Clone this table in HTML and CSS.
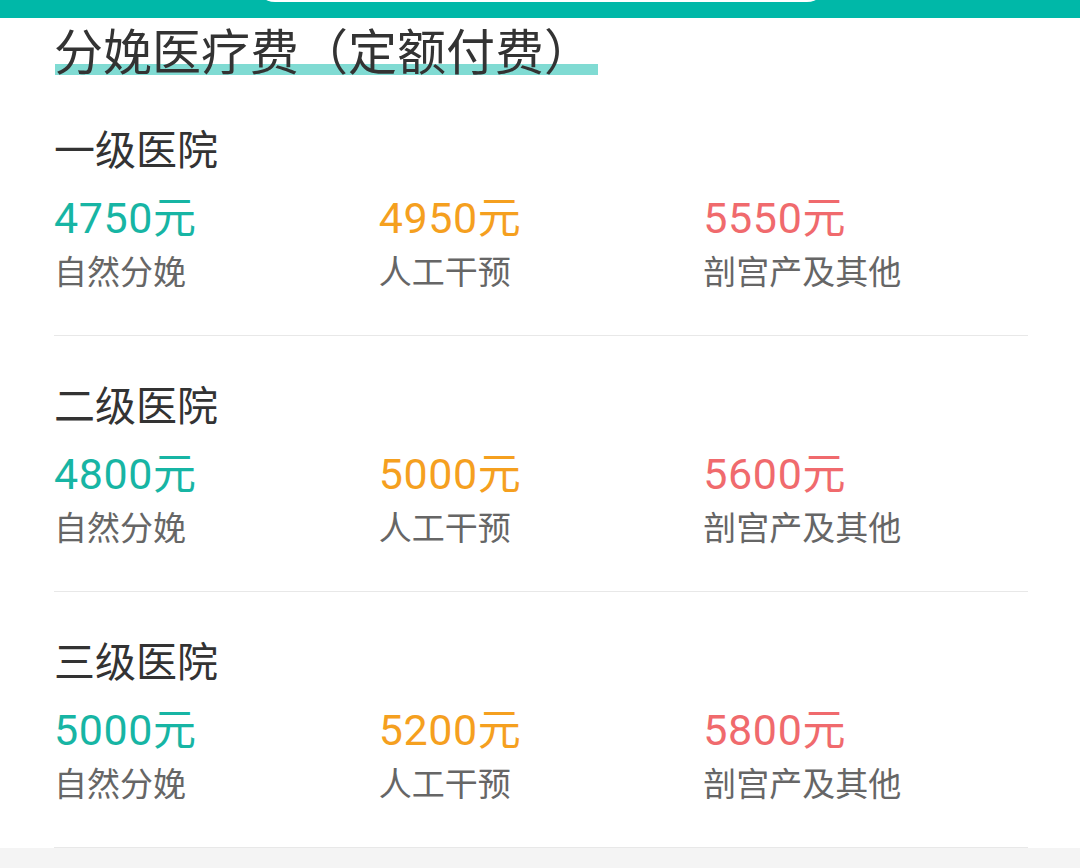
FILE: index.html
```html
<!DOCTYPE html>
<html lang="zh-CN">
<head>
<meta charset="utf-8">
<title>分娩医疗费</title>
<link rel="stylesheet" href="styles.css">
</head>
<body>
<div class="topbar"><div class="search-pill"></div></div>
<main class="card">
  <h1 class="title">分娩医疗费（定额付费）</h1>

  <section class="level">
    <h2 class="level-name">一级医院</h2>
    <div class="fees">
      <div class="fee"><div class="price teal">4750元</div><div class="label">自然分娩</div></div>
      <div class="fee"><div class="price orange">4950元</div><div class="label">人工干预</div></div>
      <div class="fee"><div class="price red">5550元</div><div class="label">剖宫产及其他</div></div>
    </div>
  </section>

  <section class="level">
    <h2 class="level-name">二级医院</h2>
    <div class="fees">
      <div class="fee"><div class="price teal">4800元</div><div class="label">自然分娩</div></div>
      <div class="fee"><div class="price orange">5000元</div><div class="label">人工干预</div></div>
      <div class="fee"><div class="price red">5600元</div><div class="label">剖宫产及其他</div></div>
    </div>
  </section>

  <section class="level">
    <h2 class="level-name">三级医院</h2>
    <div class="fees">
      <div class="fee"><div class="price teal">5000元</div><div class="label">自然分娩</div></div>
      <div class="fee"><div class="price orange">5200元</div><div class="label">人工干预</div></div>
      <div class="fee"><div class="price red">5800元</div><div class="label">剖宫产及其他</div></div>
    </div>
  </section>
</main>
</body>
</html>
```
FILE: styles.css
```css
* { box-sizing: border-box; }

html, body {
  margin: 0;
  padding: 0;
}

body {
  width: 1080px;
  height: 868px;
  overflow: hidden;
  background: #f4f4f4;
  font-family: "Noto Sans CJK SC", "Noto Sans", sans-serif;
}

.topbar {
  height: 18px;
  background: #00b8a8;
  overflow: hidden;
  display: flex;
}

.search-pill {
  width: 572px;
  height: 40px;
  margin-top: -38px;
  margin-left: 255px;
  border-radius: 20px;
  background: #ffffff;
}

.card {
  background: #ffffff;
  padding: 0 52px 0 54px;
}

.title {
  margin: 0 0 1px;
  padding: 1px 5px 0 0;
  display: inline-block;
  font-size: 49px;
  font-weight: 400;
  line-height: 60px;
  color: #333333;
  text-spacing-trim: space-all;
  background: linear-gradient(#80dbd3, #80dbd3) no-repeat 1px 46px / calc(100% - 1px) 11px;
}

.level {
  padding: 42px 0 45px;
  border-bottom: 1px solid #e8e8e8;
}

.level-name {
  margin: 0 0 21px;
  font-size: 41px;
  font-weight: 400;
  line-height: 50px;
  color: #333333;
}

.fees {
  display: grid;
  grid-template-columns: repeat(3, 1fr);
}

.price {
  font-family: Roboto, "Noto Sans CJK SC", sans-serif;
  font-size: 43px;
  line-height: 50px;
  letter-spacing: 0.6px;
  margin-bottom: 7px;
}

.teal { color: #17b5a4; }
.orange { color: #f5a01f; }
.red { color: #f06a6d; }

.label {
  font-size: 33px;
  line-height: 40px;
  color: #666666;
}
```
